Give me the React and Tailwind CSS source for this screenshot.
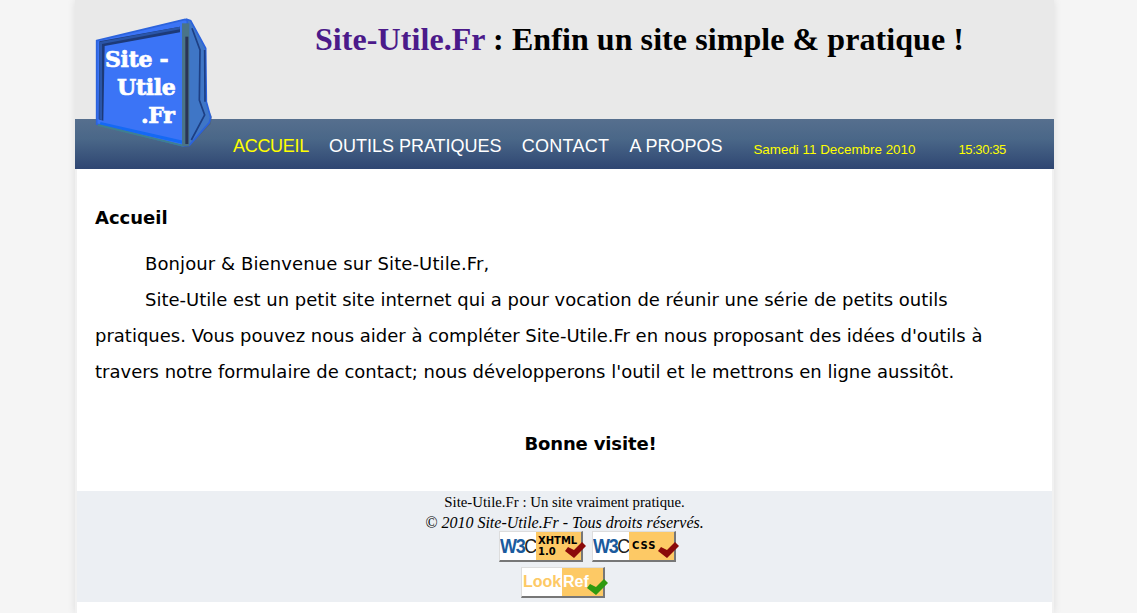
function Logo() {
    return (
        <svg className="absolute left-[-5px] top-0" width="200" height="180" viewBox="0 0 600 540">
            {/* shadow + side */}
            <polygon points="400,300 426,350 422,372 375,420" fill="#4a5a6e" opacity="0.55" />
            <polygon points="350,58 362,62 407,145 409,305 422,352 418,368 358,436 350,436" fill="#3f76c6" stroke="#2b62dc" strokeWidth="5" />
            <polyline points="366,85 390,150 388,300 404,345 364,420" fill="none" stroke="#1d3f84" strokeWidth="5" />
            <line x1="404" y1="150" x2="405" y2="305" stroke="#1d3f84" strokeWidth="5" />
            {/* front */}
            <polygon points="80,122 345,58 352,62 352,436 340,438 80,372" fill="#3b74f6" stroke="#2c63dc" strokeWidth="5" />
            <polygon points="88,124 330,80 330,97 104,138 100,362 86,358" fill="#1d3a78" />
            <polygon points="88,126 330,80 330,88 96,132 96,360 88,358" fill="#2a55a8" />
            <polygon points="92,366 340,422 340,432 88,374" fill="#1569f4" />
            <polygon points="84,372 340,434 340,440 84,378" fill="#3f8090" />
            <rect x="336" y="70" width="22" height="368" fill="#4a7488" />
            <rect x="346" y="110" width="9" height="322" fill="#2a3555" />
        </svg>
    );
}

function LogoText() {
    return (
        <div className="absolute left-[30px] top-[45px] w-[90px] whitespace-nowrap text-white font-bold text-[22px] leading-[28px] tracking-[-0.3px] font-['DejaVu_Serif',serif] [-webkit-text-stroke:0.7px_white]">
            <div>Site -</div>
            <div className="pl-[12px]">Utile</div>
            <div className="pl-[36px]">.Fr</div>
        </div>
    );
}

function Check({ color, className }) {
    return (
        <svg className={`absolute ${className}`} width="21" height="17" viewBox="0 0 21 17">
            <polygon points="0,10 3,6 9,9 17,1 21,5 9,17" fill={color} />
        </svg>
    );
}

function Badge({ left, right, check, rightClass, leftClass, width, checkClass }) {
    return (
        <div className={`relative flex h-[31px] ${width} bg-white border-r-2 border-b-2 border-r-[#777] border-b-[#777] border-l border-t border-l-[#ddd] border-t-[#ddd]`}>
            <div className={`${leftClass} flex items-center justify-center overflow-hidden`}>{left}</div>
            <div className={`flex-1 bg-[#fdc965] flex items-center ${rightClass}`}>{right}</div>
            <Check color={check} className={checkClass} />
        </div>
    );
}

function W3c() {
    return (
        <span className="inline-block scale-x-90 text-[20px] font-bold leading-none tracking-[-1.5px] font-['Liberation_Sans',sans-serif] text-[#1b5b9e]">
            W3<span className="font-normal text-[#222]">C</span>
        </span>
    );
}

export default function App() {
    return (
        <div className="h-[613px] overflow-hidden bg-[#f5f5f5]">
            <div className="relative mx-[75px] w-[979px] h-[613px] bg-[#f1f1f1] shadow-[0_0_8px_rgba(0,0,0,0.1)]">

                {/* HEADER */}

                <div className="h-[119px] bg-[#e9e9e9] pl-[240px] pr-[92px] pt-[19px]">
                    <h1 className="text-[32px] leading-[40px] tracking-[0.07px] font-bold text-black text-center whitespace-nowrap font-['Liberation_Serif',serif]">
                        <span className="text-[#4b1a8a]">Site-Utile.Fr</span> : Enfin un site simple &amp; pratique !
                    </h1>
                </div>

                {/* NAV */}

                <div className="h-[50px] flex items-start pl-[158px] pt-[16px] whitespace-nowrap bg-gradient-to-b from-[#566f8e] via-[#4a6788] via-40% to-[#2f4672] font-['Liberation_Sans',sans-serif]">
                    <a className="text-[18px] leading-[22px] tracking-[-0.3px] text-[#ffff00]">ACCUEIL</a>
                    <a className="ml-[20px] text-[18px] leading-[22px] text-white">OUTILS PRATIQUES</a>
                    <a className="ml-[20px] text-[18px] leading-[22px] tracking-[0.3px] text-white">CONTACT</a>
                    <a className="ml-[20px] text-[18px] leading-[22px] text-white">A PROPOS</a>
                    <span className="ml-[31px] mt-[5px] text-[13.4px] leading-[20px] text-[#ffff00]">Samedi 11 Decembre 2010</span>
                    <span className="ml-[43px] mt-[5px] text-[13px] leading-[20px] tracking-[-0.4px] text-[#ffff00]">15:30:35</span>
                </div>

                <Logo />
                <LogoText />

                <div className="mx-[2px] bg-white">

                    {/* BODY */}

                    <div className="h-[322px] px-[18px] pt-[31px] text-[18px] leading-[36px] text-black font-['DejaVu_Sans',sans-serif]">
                        <h2 className="font-bold">Accueil</h2>
                        <p className="mt-[10px] indent-[50px] tracking-[0.1px]">Bonjour &amp; Bienvenue sur Site-Utile.Fr,</p>
                        <p className="indent-[50px]">
                            Site-Utile est un petit site internet qui a pour vocation de réunir une série de petits outils pratiques. Vous pouvez nous aider à compléter Site-Utile.Fr en nous proposant des idées d'outils à travers notre formulaire de contact; nous développerons l'outil et le mettrons en ligne aussitôt.
                        </p>
                        <p className="mt-[36px] indent-[52px] font-bold text-center tracking-[-0.15px]">Bonne visite!</p>
                    </div>

                    {/* FOOTER */}

                    <div className="h-[111px] bg-[#eceff3] flex flex-col items-center leading-[20px] text-black font-['Liberation_Serif',serif] pt-[1px]">
                        <p className="text-[14.8px]">Site-Utile.Fr : Un site vraiment pratique.</p>
                        <p className="mt-[1px] text-[16px] italic">© 2010 Site-Utile.Fr - Tous droits réservés.</p>
                        <div className="flex gap-[9px] mt-[-2px] ml-[46px]">
                            <Badge
                                width="w-[84px]"
                                left={<W3c />}
                                leftClass="w-[36px]"
                                check="#8b0a0a"
                                checkClass="right-[-5px] bottom-[2px]"
                                rightClass="pl-[2px]"
                                right={<span className="text-[10px] leading-[11px] font-bold font-['DejaVu_Sans',sans-serif]">XHTML<br />1.0</span>}
                            />
                            <Badge
                                width="w-[84px]"
                                left={<W3c />}
                                leftClass="w-[36px]"
                                check="#8b0a0a"
                                checkClass="right-[-5px] bottom-[2px]"
                                rightClass="pl-[3px] pb-[2px]"
                                right={<span className="text-[10px] leading-[11px] tracking-[1px] font-bold font-['DejaVu_Sans',sans-serif]">CSS</span>}
                            />
                        </div>
                        <div className="mt-[5px] mr-[3px]">
                            <Badge
                                width="w-[84px]"
                                left={<span className="text-[#fdc965] font-bold text-[16px] font-['Liberation_Sans',sans-serif]">Look</span>}
                                leftClass="w-[40px]"
                                check="#2f9a10"
                                checkClass="right-[-5px] bottom-[1px]"
                                rightClass=""
                                right={<span className="text-white font-bold text-[16px] pl-[1px] font-['Liberation_Sans',sans-serif]">Ref</span>}
                            />
                        </div>
                    </div>

                    <div className="h-[11px] bg-white" />
                </div>
            </div>
        </div>
    );
}
